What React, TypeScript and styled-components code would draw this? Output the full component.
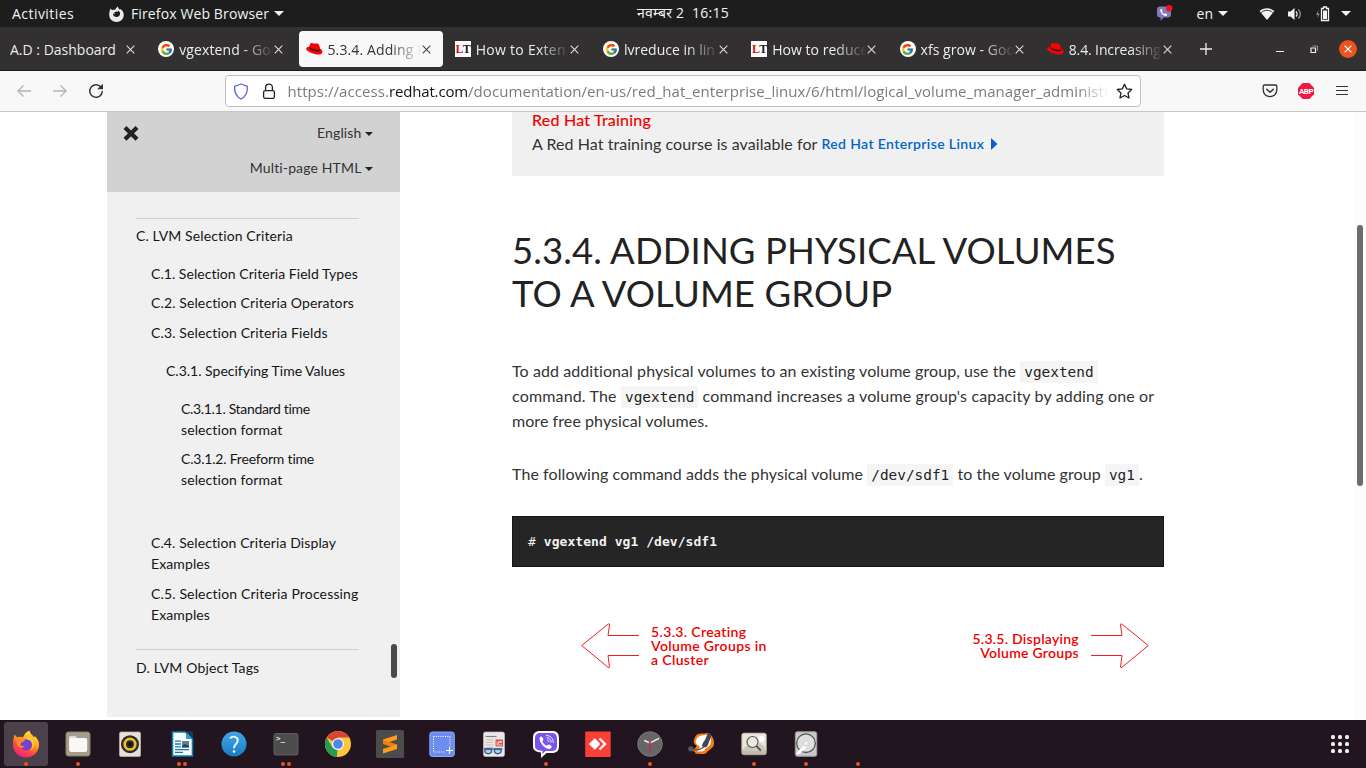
import React from "react";
import styled, { createGlobalStyle, css } from "styled-components";
import { FcGoogle } from "react-icons/fc";

const uiFont = `"Open Sans", "Noto Sans", sans-serif`;
const docFont = `Lato, "Open Sans", sans-serif`;
const monoFont = `"DejaVu Sans Mono", monospace`;

const GlobalStyle = createGlobalStyle`
  * { box-sizing: border-box; }
  html, body { margin: 0; padding: 0; overflow: hidden; }
  svg { display: block; flex: none; }
`;

const Desktop = styled.div`
  width: 1366px;
  height: 768px;
  display: flex;
  flex-direction: column;
  background: #fff;
  font-family: ${uiFont};
  overflow: hidden;
`;

/* ---------- system bar ---------- */

const SystemBar = styled.header`
  height: 27px;
  flex: none;
  display: grid;
  grid-template-columns: 1fr auto 1fr;
  align-items: center;
  background: #1d1d1d;
  color: #f2f2f2;
  font-size: 14px;
  line-height: 26px;
`;

const SystemLeft = styled.div`
  display: flex;
  align-items: center;
  padding-left: 12px;
`;

const Activities = styled.span`
  width: 97px;
  letter-spacing: 0.45px;
`;

const AppName = styled.span`
  margin-left: 7px;
  letter-spacing: 0.12px;
`;

const Caret = styled.span<{ $color?: string; $size?: number }>`
  border-left: ${(p) => p.$size ?? 5}px solid transparent;
  border-right: ${(p) => p.$size ?? 5}px solid transparent;
  border-top: ${(p) => p.$size ?? 5}px solid ${(p) => p.$color ?? "#f2f2f2"};
  width: 0;
  height: 0;
  flex: none;
`;

const Clock = styled.div`
  white-space: pre;
  letter-spacing: 0.25px;
  line-height: 24px;
  padding-bottom: 2px;
`;

const SystemRight = styled.div`
  display: flex;
  align-items: center;
  justify-content: flex-end;
  padding-right: 15px;
`;

const Language = styled.span`
  margin: 0 5px 0 24px;
`;

const StatusIcons = styled.div`
  display: flex;
  align-items: center;
  margin: 0 11px 0 31px;
  gap: 12px;
`;

/* ---------- tab strip ---------- */

const TabStrip = styled.nav`
  height: 44px;
  flex: none;
  display: flex;
  align-items: flex-start;
  padding: 4px 9px 0 2.5px;
  background: #323031;
  border-bottom: 1px solid #1f1e1f;
`;

const Tab = styled.div<{ $active?: boolean }>`
  width: 144.25px;
  height: 36px;
  margin-right: 4px;
  flex: none;
  display: flex;
  align-items: center;
  padding-left: 7.5px;
  border-radius: 4px;
  color: #ececec;
  ${(p) =>
    p.$active &&
    css`
      background: #f8f8f8;
      color: #333;
    `}
`;

const TabLabel = styled.span<{ $fade?: boolean; $ls?: number }>`
  flex: none;
  width: ${(p) => (p.$fade ? "94.500px" : "115.500px")};
  margin-left: ${(p) => (p.$fade ? "5px" : "0")};
  overflow: hidden;
  white-space: nowrap;
  font-size: 14px;
  line-height: 35px;
  padding-top: 1px;
  letter-spacing: ${(p) => p.$ls ?? 0}px;
  ${(p) =>
    p.$fade &&
    css`
      mask-image: linear-gradient(to left, transparent 0, #000 32px);
    `}
`;

const Favicon = styled.span`
  width: 16px;
  height: 16px;
  flex: none;
  display: flex;
  align-items: center;
  justify-content: center;
`;

const GoogleDisc = styled(Favicon)`
  border-radius: 50%;
  background: #fff;
`;

const LetterBadge = styled(Favicon)`
  background: #fff;
  font: bold 12px/16px "Liberation Serif", serif;
  letter-spacing: -0.8px;
  color: #222;
  & > b { color: #d11; }
`;

const NewTab = styled.div`
  height: 36px;
  width: 34px;
  display: flex;
  align-items: center;
  justify-content: center;
`;

const WindowButtons = styled.div`
  height: 36px;
  margin-left: auto;
  display: flex;
  align-items: center;
`;

const CloseWindow = styled.span`
  width: 18px;
  height: 18px;
  margin-left: 20px;
  border-radius: 50%;
  background: #e95420;
  display: flex;
  align-items: center;
  justify-content: center;
`;

/* ---------- toolbar ---------- */

const Toolbar = styled.div`
  height: 41px;
  flex: none;
  display: flex;
  align-items: center;
  background: #f8f8f8;
  border-bottom: 1px solid #c4c5c5;
  padding: 0 18px 0 16px;
`;

const NavButtons = styled.div`
  width: 209px;
  display: flex;
  align-items: center;
  gap: 20px;
`;

const AddressBar = styled.div`
  width: 916px;
  height: 32px;
  display: flex;
  align-items: center;
  padding: 0 7px 0 8px;
  background: #fff;
  border: 1px solid #bebebe;
  border-radius: 4px;
`;

const Url = styled.div`
  width: 823px;
  margin: 0 7px 0 11.500px;
  overflow: hidden;
  white-space: nowrap;
  font-size: 15px;
  line-height: 28px;
  color: #7b7b7b;
  letter-spacing: 0.06px;
  mask-image: linear-gradient(to left, transparent 0, #000 32px);
`;

const Domain = styled.span`
  color: #111;
  letter-spacing: -0.15px;
`;

const ToolbarRight = styled.div`
  margin-left: auto;
  display: flex;
  align-items: center;
  gap: 20px;
  & > :last-child { margin-left: 2px; }
`;

/* ---------- page ---------- */

const Page = styled.main`
  position: relative;
  height: 608px;
  flex: none;
  display: flex;
  align-items: flex-start;
  padding-left: 107px;
  overflow: hidden;
  background: #fff;
  font-family: ${docFont};
`;

const Sidebar = styled.aside`
  position: relative;
  width: 293px;
  height: 605px;
  flex: none;
  background: #f0f0f0;
`;

const SidebarHeader = styled.div`
  height: 80px;
  background: #d2d2d2;
  padding: 10px 27px 0 16px;
  display: flex;
  justify-content: space-between;
`;

const Selectors = styled.div`
  display: flex;
  flex-direction: column;
  align-items: flex-end;
  gap: 14px;
`;

const Selector = styled.div`
  display: flex;
  align-items: center;
  gap: 3.500px;
  font-size: 14px;
  line-height: 21px;
  letter-spacing: 0.14px;
  color: #333;
  & > ${Caret} { margin-top: 3px; }
`;

const Contents = styled.div`
  padding: 26px 41px 0 29px;
`;

const Section = styled.div<{ $top?: number; $pad?: number }>`
  border-top: 1px solid #cfcfcf;
  padding-top: ${(p) => p.$pad ?? 6}px;
  margin-top: ${(p) => p.$top ?? 0}px;
`;

const Entry = styled.div<{ $depth?: number; $top?: number; $ls?: number }>`
  margin-left: ${(p) => (p.$depth ?? 0) * 15}px;
  margin-right: -10px;
  margin-top: ${(p) => p.$top ?? 0}px;
  font-size: 14px;
  line-height: 21px;
  letter-spacing: ${(p) => p.$ls ?? 0.1}px;
  color: #151515;
  white-space: nowrap;
`;

const SidebarThumb = styled.span`
  position: absolute;
  right: 3px;
  top: 532px;
  width: 6px;
  height: 34px;
  border-radius: 3px;
  background: #484848;
`;

const PageTrack = styled.span`
  position: absolute;
  top: 0;
  right: 0;
  width: 12px;
  height: 608px;
  background: #fcfcfc;
`;

const PageThumb = styled.span`
  position: absolute;
  top: 113px;
  right: 3px;
  width: 6px;
  height: 261px;
  border-radius: 3px;
  background: #6c6c6c;
`;

const Article = styled.article`
  width: 652px;
  margin-left: 112px;
  color: #333;
  font-size: 16px;
  line-height: 25px;
`;

const TrainingBox = styled.section`
  display: flow-root;
  height: 64px;
  background: #f0f0f0;
  padding: 0 20px;
  line-height: 24px;
`;

const TrainingTitle = styled.div`
  margin-top: -4px;
  height: 24px;
  color: #e00;
  letter-spacing: 0.23px;
  -webkit-text-stroke: 0.2px #e00;
`;

const TrainingText = styled.div`
  display: flex;
  align-items: center;
  letter-spacing: 0.06px;
`;

const TrainingLink = styled.a`
  margin-left: 4px;
  display: flex;
  align-items: center;
  gap: 7px;
  font-size: 14px;
  font-weight: 600;
  letter-spacing: 0.38px;
  color: #06c;
`;

const Title = styled.h1`
  margin: 53px 0 0;
  font-size: 36.5px;
  font-weight: 400;
  line-height: 43px;
  letter-spacing: 0.09px;
  color: #222;
  white-space: nowrap;
`;

const Paragraph = styled.p<{ $top: number }>`
  margin: ${(p) => p.$top}px 0 0;
  white-space: nowrap;
`;

const Line = styled.span<{ $ls: number }>`
  letter-spacing: ${(p) => p.$ls}px;
`;

const Code = styled.code`
  display: inline-block;
  height: 22px;
  margin: -4px 0;
  padding: 0 4px;
  background: #f5f5f5;
  color: #222;
  font: 14.4px/22px ${monoFont};
`;

const Terminal = styled.pre`
  height: 51px;
  margin: 30px 0 0;
  padding: 0 15px;
  border: 1px solid #151515;
  background: #252525;
  color: #f2f2f2;
  font: 13px/49px ${monoFont};
  letter-spacing: 0.05px;
`;

const Pager = styled.nav`
  display: flex;
  justify-content: space-between;
  padding: 56px 15px 0 69px;
`;

const PagerLink = styled.a<{ $lines: number; $end?: boolean }>`
  display: flex;
  gap: 12px;
  text-align: ${(p) => (p.$end ? "right" : "left")};
  font-size: 14px;
  font-weight: 600;
  line-height: 14px;
  color: #e00;
  letter-spacing: ${(p) => (p.$end ? 0.27 : 0.36)}px;
  white-space: nowrap;
  & > span { padding-top: ${(p) => (p.$lines === 3 ? 2 : 9)}px; }
`;

/* ---------- dock ---------- */

const Dock = styled.footer`
  height: 48px;
  flex: none;
  display: flex;
  align-items: center;
  padding: 0 12px 0 4px;
  background: #23151f;
  box-shadow: inset 0 1px #1a1518;
`;

const DockItem = styled.div<{ $active?: boolean }>`
  position: relative;
  width: 44px;
  height: 44px;
  margin-right: 8px;
  flex: none;
  display: flex;
  align-items: center;
  justify-content: center;
  border-radius: 3px;
  background: ${(p) => (p.$active ? "#4c404a" : "transparent")};
`;

const Running = styled.span`
  position: absolute;
  left: 0;
  right: 0;
  bottom: 0;
  display: flex;
  justify-content: center;
  gap: 2px;
  & > i {
    width: 4px;
    height: 4px;
    border-radius: 50%;
    background: #e95420;
  }
`;

const AppsGrid = styled.div`
  margin-left: auto;
  margin-right: 5px;
  display: grid;
  grid-template-columns: repeat(3, 4px);
  gap: 3px;
  & > i {
    width: 4px;
    height: 4px;
    border-radius: 1.500px;
    background: #ececec;
  }
`;

/* ---------- icons ---------- */

const CrossIcon = ({ size = 9, color = "#ddd", width = 1.1 }) => (
  <svg width={size} height={size} viewBox="0 0 9 9">
    <path d="M.7.7 8.3 8.3M8.3.7.7 8.3" stroke={color} strokeWidth={width} fill="none" />
  </svg>
);

const RedHatIcon = () => (
  <svg width="17" height="16" viewBox="0 0 17 16">
    <path d="M.2 7.600C.2 6.400 1.800 5.900 3.100 5.800 3.600 4.300 4 3 4.600 2.300c.9-.8 1.900-.2 3 .1 1.600.4 3.100-.5 4.500.4 1.300.9 1.600 3.200 2 5 1.500.6 2.400 1.700 2.300 3.100-.2 2.600-4 3.200-7.600 2.100C4.600 12.100.2 10 .2 7.600z" fill="#f00" />
    <path d="M3.100 6.100c-.5 2.200 5.500 5 9.300 4.100 1.400-.3 1.800-1 1.600-2.200-.6.7-1.600 1-2.800.9C7.900 8.800 4.100 7.100 3.100 6.100z" fill="#111" />
  </svg>
);

const FirefoxMono = () => (
  <svg width="15" height="16" viewBox="0 0 15 16">
    <path
      fill="#ececec"
      fillRule="evenodd"
      d="M1.500 2.500 3.200 4.300C4.200 3.600 5.400 3.700 6.300 4.100 6.400 2.500 7.500 1.200 9 .5 8.900 2.200 10 2.800 11 3.700L11.600 3C14 5 14.900 7 14.800 9a7.300 7 0 0 1-14.600 0C.1 6.700.8 4.300 1.500 2.500zM7 5.600c-.9.6-1 1.100-2.500 1.100.2.800 1 1 2 .9-.9.700-2 .6-2.600.2.1 2 1.700 3.300 3.600 3.300 2.200 0 3.700-1.600 3.600-3.500-.1-1.900-1.600-3-3-3.300.6.500.9 1 .9 1.700z"
    />
  </svg>
);

const ViberTray = () => (
  <svg width="17" height="17" viewBox="0 0 17 17">
    <path d="M4 1.500h8c2 0 3 1.200 3 3v5c0 2-1.200 3-3 3H7.500L4.600 16v-3.500C2 12.500 1 11.400 1 9.500v-5c0-2 1-3 3-3z" fill="#8478c0" />
    <path d="M4.600 4.200c1-.8 1.400.4 2 1.200-.2.900-.8.9-.4 1.600.5 1 1.200 1.600 2 1.900.6.200.6-.7 1.500-.4.700.4 2 1 1.400 1.800-.8 1.200-2 .9-3.500 0C5.800 9 3.300 5.300 4.600 4.200z" fill="#fff" />
    <circle cx="13.300" cy="3.300" r="3.200" fill="#f2121f" />
  </svg>
);

const WifiIcon = () => (
  <svg width="16" height="14" viewBox="0 0 16 14">
    <path d="M.6 4C4.600.400 11.400.400 15.400 4L8 13z" fill="#f2f2f2" />
    <path d="M2.200 5.500C5.500 2.600 10.500 2.600 13.800 5.500" stroke="#1d1d1d" strokeWidth=".9" fill="none" />
  </svg>
);

const VolumeIcon = () => (
  <svg width="16" height="14" viewBox="0 0 16 14">
    <path d="M1 4.500h2.500L7.500 1v12L3.500 9.500H1z" fill="#f2f2f2" />
    <path d="M9 4.500c1.300 1.300 1.300 3.700 0 5" stroke="#f2f2f2" strokeWidth="1.400" fill="none" />
    <path d="M11.300 2.500c2.600 2.400 2.600 6.600 0 9" stroke="#999" strokeWidth="1.300" fill="none" />
  </svg>
);

const BatteryIcon = () => (
  <svg width="15" height="16" viewBox="0 0 15 16">
    <path d="M3.500 4 1 9h2L2.300 12.500 4.700 7.500H3z" fill="#8a8a8a" />
    <path d="M8.500 1h3v1.500h2v12h-7v-12h2z" fill="none" stroke="#f2f2f2" strokeWidth="1.300" />
    <path d="M8 4.500h4V13H8z" fill="#f2f2f2" />
  </svg>
);

const ArrowIcon = ({ flip = false }) => (
  <svg width="16" height="16" viewBox="0 0 16 16">
    <path
      d={flip ? "M1 8h13.500M8.500 2.500 14 8l-5.500 5.500" : "M15 8H1.500M7.500 2.500 2 8l5.500 5.500"}
      stroke="#b3b3b3"
      strokeWidth="1.300"
      fill="none"
    />
  </svg>
);

const ReloadIcon = () => (
  <svg width="16" height="16" viewBox="0 0 16 16">
    <path d="M12.900 4A6.300 6.300 0 1 0 14.300 8.500" stroke="#333" strokeWidth="1.500" fill="none" strokeLinecap="round" />
    <path d="M15 .8v5.400H9.200z" fill="#333" />
  </svg>
);

const ShieldIcon = () => (
  <svg width="14" height="17" viewBox="1 0 14 17">
    <defs>
      <linearGradient id="shield" x1="0" y1="1" x2="1" y2="0">
        <stop offset="0" stopColor="#3a69cf" />
        <stop offset="1" stopColor="#8259d8" />
      </linearGradient>
    </defs>
    <path d="M8 1 14.300 3.300C14.700 8.500 13.200 13.500 8 16 2.800 13.500 1.300 8.500 1.700 3.300z" fill="none" stroke="url(#shield)" strokeWidth="1.300" strokeLinejoin="round" />
  </svg>
);

const LockIcon = () => (
  <svg width="14" height="17" viewBox="0 0 14 17">
    <rect x="1.600" y="7.700" width="10.800" height="7.600" rx="1.600" fill="none" stroke="#222" strokeWidth="1.300" />
    <path d="M3.600 7.500V4.400c0-4.300 6.800-4.300 6.800 0v3.100" fill="none" stroke="#222" strokeWidth="1.300" />
  </svg>
);

const StarIcon = () => (
  <svg width="17" height="17" viewBox="0 0 17 17">
    <path d="m8.500 1.300 2.200 4.600 5 .6-3.700 3.400 1 5.100-4.500-2.500L4 15l1-5.100L1.300 6.500l5-.6z" fill="none" stroke="#222" strokeWidth="1.300" strokeLinejoin="round" />
  </svg>
);

const PocketIcon = () => (
  <svg width="16" height="16" viewBox="0 0 16 16">
    <path d="M2.500 2h11c.8 0 1.300.5 1.300 1.300V7c0 8.700-13.600 8.700-13.600 0V3.300C1.200 2.500 1.700 2 2.500 2z" fill="none" stroke="#333" strokeWidth="1.300" />
    <path d="M4.700 6.200 8 9.300l3.300-3.100" fill="none" stroke="#333" strokeWidth="1.500" strokeLinecap="round" strokeLinejoin="round" />
  </svg>
);

const AbpIcon = () => (
  <svg width="16" height="16" viewBox="0 0 16 16">
    <path d="M4.700 0h6.600L16 4.700v6.600L11.300 16H4.700L0 11.300V4.700z" fill="#ee1840" />
    <text x="8" y="10.900" textAnchor="middle" fontSize="8" fontWeight="700" fill="#fff" fontFamily="Roboto, sans-serif" letterSpacing="-.5">ABP</text>
  </svg>
);

const MenuIcon = () => (
  <svg width="12" height="12" viewBox="0 0 12 12">
    <path d="M0 1.500h12M0 5.500h12M0 9.500h12" stroke="#333" strokeWidth="1.200" />
  </svg>
);

const HeavyCross = () => (
  <svg width="16" height="15" viewBox="0 0 16 15">
    <path d="M3 2.800 13 12.600M13 2.800 3 12.600" stroke="#222" strokeWidth="4.700" strokeLinecap="square" transform="translate(.8 .5) scale(.9)" />
  </svg>
);

const OutlineArrow = ({ right = false }) => (
  <svg width="58" height="46" viewBox="0 0 58 46">
    <path
      d="M58 12.500H27L28.600 1.300Q28.200.3 27 1.200L.7 22.500 27 44.300Q28.200 45.200 28.500 44L27 32.500H58"
      fill="none"
      stroke="#f02020"
      strokeWidth="1"
      transform={right ? "translate(58 0) scale(-1 1)" : undefined}
    />
  </svg>
);

const art: Record<string, React.ReactNode> = {
  firefox: (
    <>
      <defs>
        <linearGradient id="ffBody" x1=".8" y1="0" x2=".3" y2="1">
          <stop offset="0" stopColor="#fff04a" />
          <stop offset=".4" stopColor="#ffa51c" />
          <stop offset=".7" stopColor="#ff4a3c" />
          <stop offset="1" stopColor="#e91f8c" />
        </linearGradient>
      </defs>
      <path d="M2.500 4.500 5.200 7.500C7 6.300 9 6.500 11 7.500 12 4 14 2 17.500.5 18 4 21 5 22 7.500L22.800 6C26 9 27.300 12 27 15.500 26.500 22.500 21 27.500 14 27.500S1 22 1 15C1 11 1.500 7.500 2.500 4.500z" fill="url(#ffBody)" />
      <circle cx="14.300" cy="14.700" r="5.800" fill="#7541d2" />
      <path d="M4 8c2-.8 4.500-.6 6.500.5l2.700 1c-.3 1.500-2 2.500-4 3-.3 1-1.500 1.300-.8 2.500.7 1.300 2.500.5 4 1.500C10 19 6.500 17.500 5 15z" fill="#ff8a20" />
      <path d="M17.500 5c3 2 5.500 5.500 4.800 10-.4 3-2 4.500-4 5.500 2.500-3.500 2.800-7 .4-9.500-1.200-1.300-2.800-1.500-4-1.500C13 7 16 7 17.500 5z" fill="#ffc72d" />
    </>
  ),
  files: (
    <>
      <rect x="2" y="2" width="24" height="24" rx="2.500" fill="#a69e8b" stroke="#877f6e" />
      <path d="M5 7.500C5 6.500 5.500 6 6.500 6h5L13 8h8.500V20h-16z" fill="#e0dbd2" />
      <rect x="5.200" y="8" width="18" height="14" rx="2" fill="#f9f8f7" />
    </>
  ),
  music: (
    <>
      <rect x="3.500" y="2" width="21" height="24.500" rx="1.500" fill="#e6e1d8" stroke="#bdb8ae" strokeWidth=".7" />
      <circle cx="14" cy="14.200" r="9" fill="#2b2b2c" />
      <circle cx="14" cy="14.200" r="5.300" fill="none" stroke="#f0bd2c" strokeWidth="2.700" />
      <circle cx="14" cy="14.200" r="2" fill="#151515" />
    </>
  ),
  writer: (
    <>
      <path d="M4.500 2h12.700l7.300 7.300V26h-20z" fill="#fafdff" stroke="#0a7fb5" strokeWidth="1.600" />
      <path d="M18.500 1.500H25V8z" fill="#123e5b" />
      <path d="M18 2v7h6.500" fill="#2f9bcf" />
      <path d="M7 11.200h6M7 14h6M7 16.800h6M7 19.600h14M7 22.400h8" stroke="#1778ad" strokeWidth="1.300" />
      <rect x="14" y="11" width="7" height="6.500" fill="#5f7f92" />
      <path d="m14 16 3-2 4 2v1.500h-7z" fill="#1c496a" />
    </>
  ),
  help: (
    <>
      <defs>
        <linearGradient id="helpBlue" x2="0" y2="1">
          <stop stopColor="#44a7e6" />
          <stop offset="1" stopColor="#177cc5" />
        </linearGradient>
      </defs>
      <circle cx="14" cy="14" r="12.500" fill="url(#helpBlue)" />
      <path d="M10 8.300c3-3 8.200-1.300 7.800 2.400-.3 3-3.800 3.500-3.800 7.500" fill="none" stroke="#fff" strokeWidth="1.800" />
      <circle cx="14" cy="21.500" r="1.300" fill="#fff" />
    </>
  ),
  terminal: (
    <>
      <rect x="2" y="3.500" width="24" height="21.500" rx="2" fill="#4b4c4b" stroke="#696b6a" strokeWidth=".8" />
      <text x="4" y="10.500" fontSize="7.500" fontWeight="700" fill="#eee" fontFamily="DejaVu Sans Mono, monospace">&gt;_</text>
    </>
  ),
  chrome: (
    <>
      <circle cx="14" cy="14" r="13" fill="#fbc63c" />
      <path d="M14 14 2.700 7.500A13 13 0 0 1 25.300 7.500H14z" fill="#d94334" />
      <path d="M2.700 7.500 8.500 17.500 14 20 13 27A13 13 0 0 1 2.700 7.500z" fill="#279b56" />
      <path d="M13 27 19.500 16.500 14 14z" fill="#fbc63c" />
      <circle cx="14" cy="14" r="6" fill="#f6f8fb" />
      <circle cx="14" cy="14" r="4.800" fill="#4e88ee" />
    </>
  ),
  sublime: (
    <>
      <rect width="28" height="28" rx="1.500" fill="#4b4c4c" />
      <path d="M7 9.500 21 5v4.500L7 14z" fill="#ff9a1c" />
      <path d="M7 10 21 14.500V19L7 14z" fill="#ee7f0c" />
      <path d="M7 19 21 14.500v4.600L7 23.500z" fill="#ff9a1c" />
    </>
  ),
  screenshot: (
    <>
      <rect x="1.800" y="2" width="24.500" height="24.500" rx="2.500" fill="#6c8ded" stroke="#8ba7ff" />
      <path d="M5.500 6.500h16.500M5.500 6.500v15.500h12M22 6.500v10" stroke="#fff" strokeWidth="1" strokeDasharray="1 1.300" fill="none" />
      <path d="M21.500 17v7M18 20.500h7" stroke="#fff" strokeWidth="1.100" />
    </>
  ),
  reader: (
    <>
      <rect x="3.500" y="2" width="21" height="24.500" rx="2" fill="#e9e9e8" stroke="#c2c2c2" strokeWidth=".7" />
      <path d="M5.500 6.500h11" stroke="#8b8171" strokeWidth="1.200" />
      <path d="M5.500 10h8M5.500 12.500h8M5.500 15h8M5.500 17.500h8" stroke="#c4beb3" />
      <rect x="15.500" y="9.500" width="7.500" height="7" fill="#dd4f45" />
      <path d="M18.500 14v-2.500h3v1h-2M17 11.500V15h5" fill="none" stroke="#fff" strokeWidth=".7" />
      <path d="M5 19h6.500v3c-1 2.300-5.500 2.300-6.500 0zM14.500 19H21v3c-1 2.300-5.500 2.300-6.500 0z" fill="#b7cce1" stroke="#305e98" strokeWidth="1.400" />
      <path d="M4 19h18.500" stroke="#305e98" strokeWidth="1.200" />
    </>
  ),
  viber: (
    <>
      <path d="M8 1h12c5 0 7 2.500 7 7v8c0 5-2.500 7-7 7h-5.500L9 28v-5.500C3.500 22 1 20 1 16V8c0-5 2.500-7 7-7z" fill="#fff" />
      <path d="M8.500 3h11C23.300 3 25 4.800 25 8.500v7c0 4-1.800 5.500-5.500 5.500h-6L10.500 24v-3.200C5 20.500 3 19 3 15.500v-7C3 5 5 3 8.500 3z" fill="#7a55ed" />
      <path d="M8.200 7c1.500-1.300 2.600.8 3.200 2.200.4 1-1.100 1.300-.9 2.200.8 2 2.300 3.400 4.200 4.100 1 .2 1.200-1.500 2.400-1 1.500.7 3.200 1.600 2.500 2.800-1.500 2.500-3.500 1.700-6 .4C9.800 15.500 6 9 8.200 7z" fill="#fff" />
      <path d="M14 5.500c4.500 0 7.300 2.800 7.300 7.500M14.500 7.700c2.800.2 4.600 2 4.700 4.800M15 10c1.200.1 1.900.9 2 2" stroke="#fff" strokeWidth=".9" fill="none" />
    </>
  ),
  anydesk: (
    <>
      <rect x="1.200" y="1.500" width="25.500" height="25.500" rx=".8" fill="#fb4038" />
      <path d="m5 14 5.700-5.700 5.700 5.700-5.700 5.700z" fill="#fff" />
      <path d="m15.500 8.500 5.500 5.500-5.500 5.500" stroke="#fff" strokeWidth="2.300" fill="none" />
    </>
  ),
  clock: (
    <>
      <circle cx="14" cy="14" r="12.300" fill="#666" stroke="#848484" strokeWidth=".8" />
      <path d="M8.300 10.500 14 13l9-4.700" stroke="#eee" strokeWidth="1.500" fill="none" />
      <path d="M14 11v11.500" stroke="#f05" strokeWidth="1" />
      <circle cx="14" cy="13" r="1.300" fill="#f43566" />
    </>
  ),
  zenmap: (
    <>
      <path d="M8 5.500c3-3 7-1.500 11-2.500 4 1 7.500 5 7 11-.7 5-5.500 5.500-7.500 9-3 2.300-7 0-11 1 .5-3-3-2.200-3.500-4 2-1 4.500-2 4.500-4.500C4 13 6 9 8 5.500z" fill="#f37b16" />
      <path d="M9.500 7.500c3-2.500 6-2 9-2.700 3.500 1.500 5.300 4 4.300 8.500-1 3.500-5 4-6.500 7.500-2 1.200-4.500.5-7.500.7 3-1.700 3-3.500 2.500-5.500-4.500-2-4.300-5-1.800-8.500z" fill="#fff" />
      <path d="M20 3c2.200-.5 3.500 1 3 3.500L19.500 16c-1.300 2-5 1.500-5.500-.5C14.500 12 17.500 10.500 18 7.500z" fill="#424751" />
      <path d="M3.500 19c4 1.500 9 .5 12.500-2" stroke="#555861" strokeWidth="1.400" fill="none" />
      <circle cx="2.800" cy="18.800" r="2.600" fill="#555861" />
    </>
  ),
  viewer: (
    <>
      <rect x="1.800" y="3.200" width="24.500" height="21.500" rx="2" fill="#c0bcb0" stroke="#aaa596" />
      <rect x="2.300" y="3.500" width="23.500" height="17" rx="1.500" fill="#e8e6df" />
      <path d="m3 19 6-5 5 4 6-5 5 4v4H3z" fill="#cdc9ba" />
      <circle cx="21.500" cy="9" r="3" fill="#fff" />
      <circle cx="12.500" cy="12" r="5.500" fill="#eceae4" fillOpacity=".8" stroke="#57554f" strokeWidth="1.200" />
      <path d="m16.500 16 4.300 4.700" stroke="#4a4945" strokeWidth="1.800" />
    </>
  ),
  disk: (
    <>
      <rect x="3.300" y="1.800" width="21.500" height="24.500" rx="2" fill="#c9c9c9" stroke="#9c9c9c" />
      <circle cx="14" cy="13.200" r="9.300" fill="#dedede" stroke="#555" strokeWidth="1.300" />
      <circle cx="14" cy="13.200" r="2.700" fill="#ededed" stroke="#ccc" strokeWidth=".7" />
      <path d="m6 23 6.500-5.500" stroke="#fff" strokeWidth="3" strokeLinecap="round" />
    </>
  ),
  blank: null,
};

const dock: { icon: string; dots?: number }[] = [
  { icon: "firefox", dots: 1 },
  { icon: "files", dots: 1 },
  { icon: "music" },
  { icon: "writer", dots: 2 },
  { icon: "help" },
  { icon: "terminal", dots: 2 },
  { icon: "chrome" },
  { icon: "sublime" },
  { icon: "screenshot" },
  { icon: "reader" },
  { icon: "viber", dots: 1 },
  { icon: "anydesk" },
  { icon: "clock", dots: 1 },
  { icon: "zenmap" },
  { icon: "viewer", dots: 1 },
  { icon: "disk", dots: 1 },
  { icon: "blank", dots: 1 },
];

type TabInfo = { label: string; icon?: "google" | "redhat" | "lt"; active?: boolean; ls?: number };

const tabs: TabInfo[] = [
  { label: "A.D : Dashboard" },
  { label: "vgextend - Goo", icon: "google", ls: 0.1 },
  { label: "5.3.4. Adding P", icon: "redhat", active: true, ls: 0.12 },
  { label: "How to Exten", icon: "lt", ls: 0.27 },
  { label: "lvreduce in lin", icon: "google" },
  { label: "How to reduce", icon: "lt", ls: 0.02 },
  { label: "xfs grow - Goo", icon: "google", ls: 0.05 },
  { label: "8.4. Increasing", icon: "redhat", ls: -0.13 },
];

const TabIcon = ({ icon }: { icon?: TabInfo["icon"] }) => {
  if (icon === "google") return <GoogleDisc><FcGoogle size={13} /></GoogleDisc>;
  if (icon === "redhat") return <Favicon><RedHatIcon /></Favicon>;
  if (icon === "lt") return <LetterBadge><b>L</b>T</LetterBadge>;
  return null;
};

export default function App() {
  return (
    <Desktop>
      <GlobalStyle />
      <SystemBar>
        <SystemLeft>
          <Activities>Activities</Activities>
          <FirefoxMono />
          <AppName>Firefox Web Browser</AppName>
          <Caret style={{ marginLeft: 5 }} />
        </SystemLeft>
        <Clock>नवम्बर 2  16:15</Clock>
        <SystemRight>
          <ViberTray />
          <Language>en</Language>
          <Caret />
          <StatusIcons>
            <WifiIcon />
            <VolumeIcon />
            <BatteryIcon />
          </StatusIcons>
          <Caret />
        </SystemRight>
      </SystemBar>

      <TabStrip>
        {tabs.map((t) => (
          <Tab key={t.label} $active={t.active}>
            <TabIcon icon={t.icon} />
            <TabLabel $fade={!!t.icon} $ls={t.ls}>{t.label}</TabLabel>
            <CrossIcon color={t.active ? "#444" : "#ddd"} />
          </Tab>
        ))}
        <NewTab>
          <svg width="12" height="12" viewBox="0 0 12 12">
            <path d="M6 0v12M0 6h12" stroke="#eee" strokeWidth="1.300" />
          </svg>
        </NewTab>
        <WindowButtons>
          <svg width="8" height="10" viewBox="0 0 8 10"><path d="M0 7.500h8" stroke="#eee" /></svg>
          <svg width="9" height="9" viewBox="0 0 9 9" style={{ marginLeft: 26 }}>
            <path d="M1 3h4.500v4.500H1z" stroke="#eee" strokeWidth="1.200" fill="none" />
            <path d="M2.500 1h5v5" stroke="#aaa" strokeWidth=".8" fill="none" />
          </svg>
          <CloseWindow><CrossIcon size={8} color="#fff" width={1.5} /></CloseWindow>
        </WindowButtons>
      </TabStrip>

      <Toolbar>
        <NavButtons>
          <ArrowIcon />
          <ArrowIcon flip />
          <ReloadIcon />
        </NavButtons>
        <AddressBar>
          <ShieldIcon />
          <span style={{ width: 14 }} />
          <LockIcon />
          <Url>
            https://access.<Domain>redhat.com</Domain>
            /documentation/en-us/red_hat_enterprise_linux/6/html/logical_volume_manager_administr
          </Url>
          <StarIcon />
        </AddressBar>
        <ToolbarRight>
          <PocketIcon />
          <AbpIcon />
          <MenuIcon />
        </ToolbarRight>
      </Toolbar>

      <Page>
        <Sidebar>
          <SidebarHeader>
            <span style={{ paddingTop: 4 }}><HeavyCross /></span>
            <Selectors>
              <Selector>English<Caret $color="#222" $size={4} /></Selector>
              <Selector>Multi-page HTML<Caret $color="#222" $size={4} /></Selector>
            </Selectors>
          </SidebarHeader>
          <Contents>
            <Section>
              <Entry $ls={0.12}>C. LVM Selection Criteria</Entry>
              <Entry $depth={1} $top={17} $ls={0.04}>C.1. Selection Criteria Field Types</Entry>
              <Entry $depth={1} $top={8} $ls={0.12}>C.2. Selection Criteria Operators</Entry>
              <Entry $depth={1} $top={9} $ls={0.13}>C.3. Selection Criteria Fields</Entry>
              <Entry $depth={2} $top={17} $ls={0}>C.3.1. Specifying Time Values</Entry>
              <Entry $depth={3} $top={17}>
                <Line $ls={-0.32}>C.3.1.1. Standard time</Line><br />selection format
              </Entry>
              <Entry $depth={3} $top={8}>
                <Line $ls={-0.2}>C.3.1.2. Freeform time</Line><br />selection format
              </Entry>
              <Entry $depth={1} $top={42}>
                C.4. Selection Criteria Display<br />Examples
              </Entry>
              <Entry $depth={1} $top={9}>
                <Line $ls={0.15}>C.5. Selection Criteria Processing</Line><br />Examples
              </Entry>
            </Section>
            <Section $top={24} $pad={7}>
              <Entry $ls={0.14}>D. LVM Object Tags</Entry>
            </Section>
          </Contents>
          <SidebarThumb />
        </Sidebar>

        <Article>
          <TrainingBox>
            <TrainingTitle>Red Hat Training</TrainingTitle>
            <TrainingText>
              A Red Hat training course is available for
              <TrainingLink>
                Red Hat Enterprise Linux
                <svg width="7" height="12" viewBox="0 0 7 12"><path d="M0 0l6.500 6L0 12z" fill="#06c" /></svg>
              </TrainingLink>
            </TrainingText>
          </TrainingBox>
          <Title>
            5.3.4. ADDING PHYSICAL VOLUMES<br />TO A VOLUME GROUP
          </Title>
          <Paragraph $top={43}>
            <Line $ls={0.075}>To add additional physical volumes to an existing volume group, use the </Line>
            <Code>vgextend</Code><br />
            <Line $ls={0.16}>command. The </Line><Code>vgextend</Code>
            <Line $ls={0.16}> command increases a volume group's capacity by adding one or</Line><br />
            <Line $ls={0.07}>more free physical volumes.</Line>
          </Paragraph>
          <Paragraph $top={28}>
            <Line $ls={0.08}>The following command adds the physical volume </Line>
            <Code>/dev/sdf1</Code>
            <Line $ls={0.07}> to the volume group </Line>
            <Code>vg1</Code>.
          </Paragraph>
          <Terminal># <b>vgextend vg1 /dev/sdf1</b></Terminal>
          <Pager>
            <PagerLink $lines={3}>
              <OutlineArrow />
              <span>5.3.3. Creating<br />Volume Groups in<br />a Cluster</span>
            </PagerLink>
            <PagerLink $lines={2} $end>
              <span>5.3.5. Displaying<br />Volume Groups</span>
              <OutlineArrow right />
            </PagerLink>
          </Pager>
        </Article>
        <PageTrack />
        <PageThumb />
      </Page>

      <Dock>
        {dock.map((d, i) => (
          <DockItem key={d.icon} $active={i === 0}>
            <svg width="28" height="28" viewBox="0 0 28 28">{art[d.icon]}</svg>
            {d.dots && (
              <Running>
                {Array.from({ length: d.dots }, (_, k) => <i key={k} />)}
              </Running>
            )}
          </DockItem>
        ))}
        <AppsGrid>
          {Array.from({ length: 9 }, (_, k) => <i key={k} />)}
        </AppsGrid>
      </Dock>
    </Desktop>
  );
}
